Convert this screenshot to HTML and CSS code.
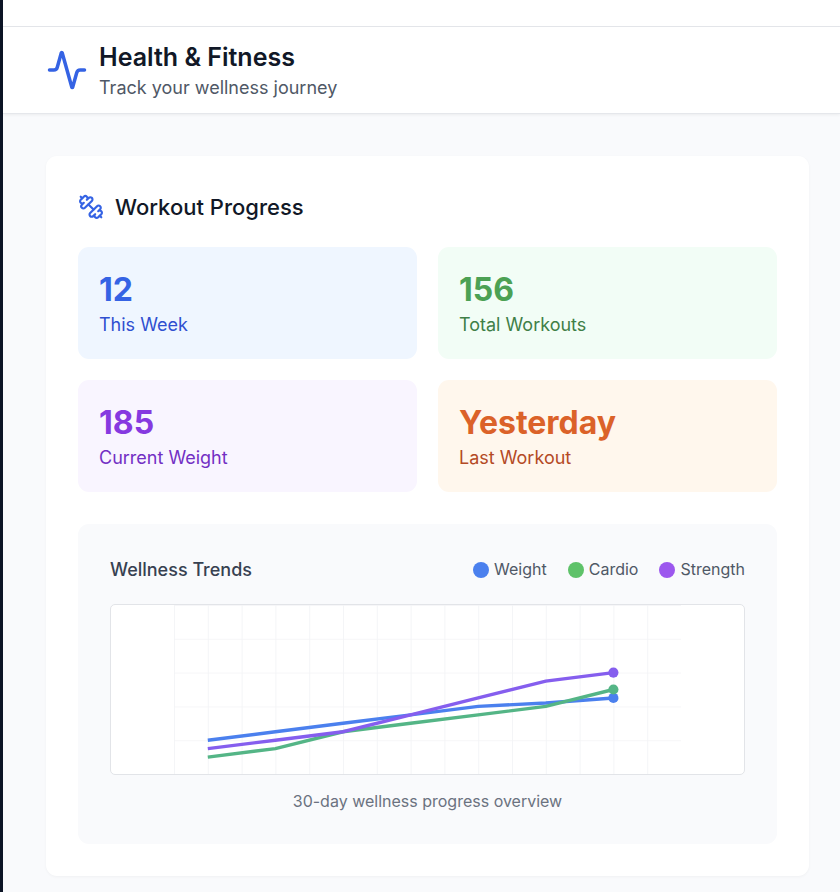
FILE: index.html
```html
<!DOCTYPE html>
<html lang="en">
<head>
<meta charset="utf-8">
<meta name="viewport" content="width=device-width, initial-scale=1">
<title>Health &amp; Fitness</title>
<link rel="stylesheet" href="styles.css">
</head>
<body>
<div class="app">
  <div class="topbar"></div>
  <header class="header">
    <svg class="header-icon" viewBox="0 0 24 24" aria-hidden="true">
      <path d="M22 12h-2.48a2 2 0 0 0-1.93 1.46l-2.35 8.36a.25.25 0 0 1-.48 0L9.24 2.18a.25.25 0 0 0-.48 0l-2.35 8.36A2 2 0 0 1 4.49 12H2"/>
    </svg>
    <div>
      <h1 class="title">Health &amp; Fitness</h1>
      <p class="subtitle">Track your wellness journey</p>
    </div>
  </header>
  <main class="main">
    <section class="card">
      <div class="card-head">
        <svg class="card-icon" viewBox="0 0 24 24" aria-hidden="true">
          <path d="M14.4 14.4 9.6 9.6"/>
          <path d="M18.657 21.485a2 2 0 1 1-2.829-2.828l-1.767 1.768a2 2 0 1 1-2.829-2.829l6.364-6.364a2 2 0 1 1 2.829 2.829l-1.768 1.767a2 2 0 1 1 2.828 2.829z"/>
          <path d="m21.5 21.5-1.4-1.4"/>
          <path d="M3.9 3.9 2.5 2.5"/>
          <path d="M6.404 12.768a2 2 0 1 1-2.829-2.829l1.768-1.767a2 2 0 1 1-2.828-2.829l2.828-2.828a2 2 0 1 1 2.829 2.828l1.767-1.768a2 2 0 1 1 2.829 2.829z"/>
        </svg>
        <h2 class="card-title">Workout Progress</h2>
      </div>
      <div class="stats">
        <div class="stat stat-blue"><div class="value">12</div><div class="label">This Week</div></div>
        <div class="stat stat-green"><div class="value">156</div><div class="label">Total Workouts</div></div>
        <div class="stat stat-purple"><div class="value">185</div><div class="label">Current Weight</div></div>
        <div class="stat stat-orange"><div class="value">Yesterday</div><div class="label">Last Workout</div></div>
      </div>
      <div class="trends">
        <div class="trends-head">
          <h3 class="trends-title">Wellness Trends</h3>
          <ul class="legend">
            <li><span class="dot dot-blue"></span>Weight</li>
            <li><span class="dot dot-green"></span>Cardio</li>
            <li><span class="dot dot-purple"></span>Strength</li>
          </ul>
        </div>
        <div class="chart">
          <svg viewBox="0 0 300 100" role="img" aria-label="Weight, cardio and strength over 30 days">
            <defs>
              <pattern id="grid" width="20" height="20" patternUnits="userSpaceOnUse">
                <path d="M20 0H0V20" fill="none" stroke="#f3f4f6" stroke-width="1"/>
              </pattern>
            </defs>
            <rect width="300" height="100" fill="url(#grid)"/>
            <g fill="none" stroke-width="2">
              <polyline stroke="#4b80ee" points="20,80 60,75 100,70 140,65 180,60 220,58 260,55"/>
              <polyline stroke="#54b586" points="20,90 60,85 100,75 140,70 180,65 220,60 260,50"/>
              <polyline stroke="#855eee" points="20,85 60,80 100,75 140,65 180,55 220,45 260,40"/>
            </g>
            <circle cx="260" cy="55" r="3" fill="#4b80ee"/>
            <circle cx="260" cy="50" r="3" fill="#54b586"/>
            <circle cx="260" cy="40" r="3" fill="#855eee"/>
          </svg>
        </div>
        <p class="caption">30-day wellness progress overview</p>
      </div>
    </section>
  </main>
</div>
</body>
</html>
```

FILE: styles.css
```css
* {
  box-sizing: border-box;
}

body,
h1,
h2,
h3,
p,
ul {
  margin: 0;
  padding: 0;
}

body {
  font-family: Inter, "Liberation Sans", sans-serif;
  background: #f9fafc;
  color: #111827;
}

.app {
  min-height: 100vh;
  border-left: 3px solid #0c1425;
}

.topbar {
  height: 27px;
  background: #fff;
  border-bottom: 1px solid #e5e7eb;
}

.header {
  display: flex;
  align-items: center;
  gap: 11px;
  padding: 12px 43px;
  background: #fff;
  border-bottom: 1px solid #e5e7eb;
  box-shadow: 0 1px 3px rgba(0, 0, 0, 0.06);
}

svg {
  display: block;
}

.header-icon,
.card-icon {
  flex: none;
  fill: none;
  stroke: #3563e4;
  stroke-width: 2;
  stroke-linecap: round;
  stroke-linejoin: round;
}

.header-icon {
  width: 42px;
  height: 42px;
}

.title {
  font-size: 25px;
  line-height: 36px;
  font-weight: 600;
}

.subtitle {
  font-size: 18px;
  line-height: 26px;
  color: #4f5866;
}

.main {
  padding: 42px 31px 16px 43px;
}

.card {
  padding: 32px;
  background: #fff;
  border-radius: 11px;
  box-shadow: 0 1px 3px rgba(0, 0, 0, 0.04);
}

.card-head {
  display: flex;
  align-items: center;
  gap: 11px;
  margin-bottom: 21px;
}

.card-icon {
  width: 26px;
  height: 26px;
}

.card-title {
  font-size: 22px;
  line-height: 38px;
  font-weight: 500;
}

.stats {
  display: grid;
  grid-template-columns: 1fr 1fr;
  gap: 21px;
}

.stat {
  padding: 21px;
  border-radius: 11px;
}

.value {
  font-size: 32px;
  line-height: 44px;
  font-weight: 700;
}

.label {
  font-size: 18px;
  line-height: 26px;
}

.stat-blue {
  background: #eff6ff;
  color: #3563e4;
}

.stat-blue .label {
  color: #2f4fd0;
}

.stat-green {
  background: #f2fdf6;
  color: #4ca154;
}

.stat-green .label {
  color: #3f7f47;
}

.stat-purple {
  background: #f9f5ff;
  color: #8639e0;
}

.stat-purple .label {
  color: #732fc4;
}

.stat-orange {
  background: #fff7ed;
  color: #db6229;
}

.stat-orange .label {
  color: #b44a25;
}

.trends {
  margin-top: 32px;
  padding: 32px;
  background: #f9fafc;
  border-radius: 11px;
}

.trends-head {
  display: flex;
  align-items: center;
  justify-content: space-between;
  margin-bottom: 21px;
}

.trends-title {
  font-size: 18px;
  line-height: 27px;
  font-weight: 500;
  color: #374151;
}

.legend {
  display: flex;
  gap: 21px;
  list-style: none;
  font-size: 16px;
  line-height: 21px;
  color: #4f5866;
}

.legend li {
  display: flex;
  align-items: center;
  gap: 5px;
}

.dot {
  width: 16px;
  height: 16px;
  border-radius: 50%;
}

.dot-blue {
  background: #4b80ee;
}

.dot-green {
  background: #5ec269;
}

.dot-purple {
  background: #9c57ee;
}

.chart {
  background: #fff;
  border: 1px solid #e2e4e8;
  border-radius: 5px;
}

.chart svg {
  width: 100%;
  height: 169px;
}

.caption {
  margin-top: 16px;
  font-size: 16px;
  line-height: 21px;
  text-align: center;
  color: #6b7280;
}
```
